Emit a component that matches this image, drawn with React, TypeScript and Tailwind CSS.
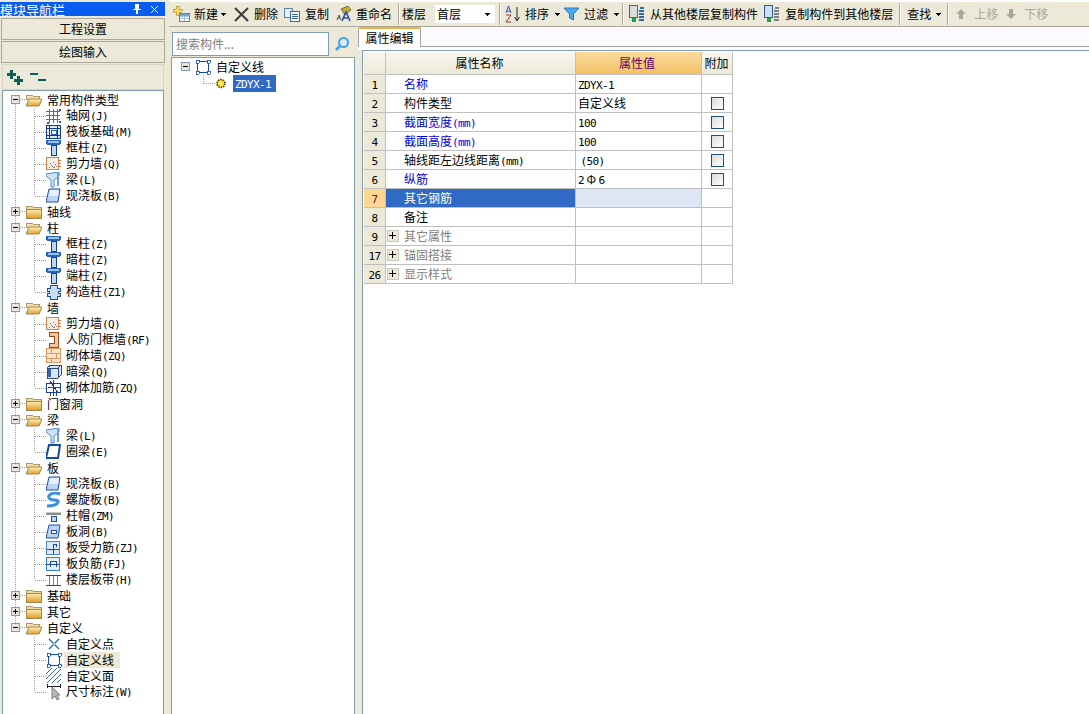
import type { ReactNode } from "react";

const cjk = "font-['Noto_Sans_CJK_SC','Liberation_Sans',sans-serif]";

// latin runs in the reference are a 6px wide mono, cjk is 12px
const Txt = ({ children }: { children: string }) => (
    <span className="whitespace-pre">
        {children.split(/([\x20-\x7e]+)/).map((part, i) =>
            /^[\x20-\x7e]+$/.test(part) ? (
                <span key={i} className="font-['DejaVu_Sans_Mono',monospace] text-[11px] tracking-[-0.6px]">
                    {part}
                </span>
            ) : (
                <span key={i}>{part}</span>
            )
        )}
    </span>
);

const S = ({ children, w = 16, h = 16 }: { children: ReactNode; w?: number; h?: number }) => (
    <svg width={w} height={h} viewBox={`0 0 ${w} ${h}`} className="block shrink-0" shapeRendering="crispEdges">
        {children}
    </svg>
);

const icons: Record<string, ReactNode> = {
    grid: (
        <S>
            <path d="M0 3.500h14M0 7.500h14M0 11.500h14M3.500 1v14M7.500 1v14M11.500 1v14" stroke="#4a6cb4" fill="none" />
            <path d="M13 1h2v2h-2zM13 13h2v2h-2zM1 14h2v2H1z" fill="#2a5cc0" />
        </S>
    ),
    raft: (
        <S>
            <rect x="0.5" y="1.5" width="14" height="13" fill="#dfe8f6" stroke="#123f80" />
            <path d="M1 4.5h13M1 11.5h13M3.5 2v12M11.5 2v12" stroke="#123f80" fill="none" />
            <path d="M5 6h5v4H5z" fill="#fff" stroke="#2a5cc0" />
        </S>
    ),
    column: (
        <S>
            <path d="M0 0h15v3l-1 2H1L0 3z" fill="#2a62c0" />
            <path d="M2 1h11v2H2z" fill="#9cc0ee" />
            <path d="M5 5h5v10H5z" fill="#bcd6f4" stroke="#123f80" />
        </S>
    ),
    shear: (
        <S>
            <rect x="0.5" y="1.5" width="12" height="12" fill="#f8eee4" stroke="#d8804a" />
            <path d="M3 11h1v1H3zM5 9h1v1H5zM7 11h2v1H7zM9 8h1v1H9zM4 7h1v1H4zM7 6h1v1H7zM10 10h1v1h-1zM6 10h1v1H6z" fill="#807870" />
            <path d="M13 4h2M13 7h2M13 10h2" stroke="#d8702a" />
        </S>
    ),
    beam: (
        <S>
            <path d="M0 2l13-2v4l-5 4v7H5V8L0 4z" fill="#cfe3f8" stroke="#4a8ad8" strokeWidth="1" shapeRendering="auto" />
            <path d="M11 1v13h2V1z" fill="#6aa0e0" />
        </S>
    ),
    slab: (
        <S>
            <path d="M3 1h11l-2 13H0z" fill="#bcd4f2" stroke="#1a50b0" shapeRendering="auto" />
            <path d="M4 2h9l-1 6H3z" fill="#e6f0fb" shapeRendering="auto" />
        </S>
    ),
    puzzle: (
        <S>
            <path d="M4 1h7v3h3v3h-2v2h2v3h-3v3H4v-3H1V9h2V7H1V4h3z" fill="#c8dcf6" stroke="#1a4ea0" />
        </S>
    ),
    door: (
        <S>
            <path d="M3 0h9v15H3v-4h5V4H3z" fill="#f0c8a0" stroke="#a0481c" />
        </S>
    ),
    brick: (
        <S>
            <rect x="0.5" y="0.5" width="14" height="14" fill="#fbe4cc" stroke="#e09a66" />
            <path d="M1 5h14M1 10h14M5 1v4M10 5v5M5 10v5" stroke="#e09a66" fill="none" />
        </S>
    ),
    hidden: (
        <S>
            <path d="M1 4l4-3h10v10l-3 3H1z" fill="#d8e6f6" stroke="#2a4a80" />
            <path d="M1 4h11v10M12 4l3-3" fill="none" stroke="#2a4a80" />
            <path d="M2 5h3v8H2z" fill="#3a66a8" />
        </S>
    ),
    masonry: (
        <S>
            <path d="M0 3h14v9H0z" fill="#fff" stroke="#1a3ea0" />
            <path d="M4 1l8 12M7 0v16M2 7h12M4 12v4M10 12v4" stroke="#1a3ea0" fill="none" />
        </S>
    ),
    ring: (
        <S>
            <path d="M3 1h11l-2 13H0z" fill="#fff" stroke="#1a4aa0" strokeWidth="2" shapeRendering="auto" />
        </S>
    ),
    spiral: (
        <S>
            <path d="M14 2C6-1 0 4 4 7c3 2 9 0 8 3-1 3-6 4-11 4" fill="none" stroke="#3a8ee0" strokeWidth="3" shapeRendering="auto" />
        </S>
    ),
    cap: (
        <S>
            <path d="M0 4h15v3H0z" fill="#8c8c8c" />
            <path d="M0 4h15v1H0z" fill="#c8c8c8" />
            <path d="M5 8h5v5H5z" fill="#c6daf4" stroke="#1a4ea0" />
        </S>
    ),
    hole: (
        <S>
            <path d="M3 1h11l-2 13H0z" fill="#bcd4f2" stroke="#1a50b0" shapeRendering="auto" />
            <rect x="5" y="6" width="5" height="3" fill="#fff" stroke="#1a50b0" />
        </S>
    ),
    rebarA: (
        <S>
            <rect x="0.5" y="1.5" width="13" height="13" fill="#d8e8f8" stroke="#4a88d0" />
            <path d="M1 9h12M7 4v10" stroke="#1a4aa0" fill="none" />
            <path d="M7 4h3v3" stroke="#1a4aa0" fill="none" />
        </S>
    ),
    rebarB: (
        <S>
            <rect x="0.5" y="1.5" width="13" height="13" fill="#e6f0fa" stroke="#3a78c8" />
            <path d="M1 8h12M4 5h6v6M4 5v6" stroke="#1a4aa0" fill="none" />
        </S>
    ),
    band: (
        <S>
            <path d="M0 3h15M0 13h15" stroke="#1a4aa0" />
            <path d="M3 4v9M7 4v9M11 4v9" stroke="#5a88c8" />
        </S>
    ),
    point: (
        <S>
            <path d="M3 3l10 10M13 3L3 13" stroke="#2a62b8" strokeWidth="1.4" shapeRendering="auto" />
            <circle cx="8" cy="8" r="1.5" fill="#9ac0ee" />
        </S>
    ),
    line: (
        <S>
            <rect x="2.5" y="2.5" width="11" height="11" fill="none" stroke="#0a4ac0" />
            <path d="M1 1h3v3H1zM12 1h3v3h-3zM1 12h3v3H1zM12 12h3v3h-3z" fill="#fff" stroke="#0a4ac0" strokeWidth="0.8" />
        </S>
    ),
    hatch: (
        <S>
            <path d="M0 6L6 0M0 11L11 0M1 15L15 1M6 15L15 6M11 15l4-4" stroke="#2a6ad8" fill="none" shapeRendering="auto" />
        </S>
    ),
    dim: (
        <S>
            <path d="M1 0v4M14 0v4M1 2h13" stroke="#202020" fill="none" />
            <path d="M6 3v12l3-3 2 4 2-1-2-4h3z" fill="#b8b8b8" stroke="#808080" shapeRendering="auto" />
        </S>
    ),
};

const Folder = ({ open }: { open: boolean }) => (
    <S>
        <defs>
            <linearGradient id="fold" x1="0" y1="0" x2="0" y2="1">
                <stop offset="0" stopColor="#fff3b8" />
                <stop offset="1" stopColor="#e0a030" />
            </linearGradient>
        </defs>
        {open ? (
            <>
                <path d="M0 3h6l1 1h6v3H0z" fill="#f4e2a8" stroke="#a89870" />
                <path d="M3 7h13l-3 7H0z" fill="url(#fold)" stroke="#a08848" shapeRendering="auto" />
            </>
        ) : (
            <>
                <path d="M0 2h6l1 1h8v2H0z" fill="#f0dca0" stroke="#a89870" />
                <path d="M0 5h15v9H0z" fill="url(#fold)" stroke="#a08848" />
            </>
        )}
    </S>
);

const ExpandBox = ({ open }: { open: boolean }) => (
    <>
        <rect x="8.5" y="3.5" width="8" height="8" fill="#e8e6dc" stroke="#7f9db9" />
        <path d={open ? "M10 7.5h5" : "M10 7.5h5M12.5 5v5"} stroke="#000" fill="none" />
    </>
);

type Node = { label: string; open: boolean; last?: boolean; kids: [string, string][] };

const tree: Node[] = [
    {
        label: "常用构件类型",
        open: true,
        kids: [
            ["grid", "轴网(J)"],
            ["raft", "筏板基础(M)"],
            ["column", "框柱(Z)"],
            ["shear", "剪力墙(Q)"],
            ["beam", "梁(L)"],
            ["slab", "现浇板(B)"],
        ],
    },
    { label: "轴线", open: false, kids: [] },
    {
        label: "柱",
        open: true,
        kids: [
            ["column", "框柱(Z)"],
            ["column", "暗柱(Z)"],
            ["column", "端柱(Z)"],
            ["puzzle", "构造柱(Z1)"],
        ],
    },
    {
        label: "墙",
        open: true,
        kids: [
            ["shear", "剪力墙(Q)"],
            ["door", "人防门框墙(RF)"],
            ["brick", "砌体墙(ZQ)"],
            ["hidden", "暗梁(Q)"],
            ["masonry", "砌体加筋(ZQ)"],
        ],
    },
    { label: "门窗洞", open: false, kids: [] },
    {
        label: "梁",
        open: true,
        kids: [
            ["beam", "梁(L)"],
            ["ring", "圈梁(E)"],
        ],
    },
    {
        label: "板",
        open: true,
        kids: [
            ["slab", "现浇板(B)"],
            ["spiral", "螺旋板(B)"],
            ["cap", "柱帽(ZM)"],
            ["hole", "板洞(B)"],
            ["rebarA", "板受力筋(ZJ)"],
            ["rebarB", "板负筋(FJ)"],
            ["band", "楼层板带(H)"],
        ],
    },
    { label: "基础", open: false, kids: [] },
    { label: "其它", open: false, kids: [] },
    {
        label: "自定义",
        open: true,
        last: true,
        kids: [
            ["point", "自定义点"],
            ["line", "自定义线"],
            ["hatch", "自定义面"],
            ["dim", "尺寸标注(W)"],
        ],
    },
];

const dot = { stroke: "#a0a0a0", strokeDasharray: "1 1", fill: "none" };

const RootRow = ({ node, first }: { node: Node; first: boolean }) => (
    <div className="flex h-4 items-center">
        <svg width="23" height="16" className="block shrink-0" shapeRendering="crispEdges">
            <path d={`M12.5 ${first ? 8 : 0}V${node.last ? 8 : 16}M13 7.5h10`} {...dot} />
            <ExpandBox open={node.open} />
        </svg>
        <Folder open={node.open} />
        <span className="ml-[5px] whitespace-nowrap">
            <Txt>{node.label}</Txt>
        </span>
    </div>
);

const KidRow = ({ icon, label, last, lastRoot }: { icon: string; label: string; last: boolean; lastRoot?: boolean }) => (
    <div className="flex h-4 items-center">
        <svg width="43" height="16" className="block shrink-0" shapeRendering="crispEdges">
            <path d={`${lastRoot ? "" : "M12.5 0V16"}M31.5 0V${last ? 8 : 16}M32 8.5h11`} {...dot} />
        </svg>
        <div className="w-4 shrink-0">{icons[icon]}</div>
        <span
            className={`ml-[2px] whitespace-nowrap px-[2px] leading-[16px] ${
                label === "自定义线" ? "bg-[#ece9d8] pr-[6px]" : ""
            }`}
        >
            <Txt>{label}</Txt>
        </span>
    </div>
);

const NavPanel = () => (
    <aside className="flex w-[165px] shrink-0 flex-col">
        <div className="mt-[2px] flex h-[14px] items-center justify-between bg-[#0a5cf0] pr-[6px] text-[13px] leading-none text-white">
            <span>模块导航栏</span>
            <div className="flex items-center gap-[9px]">
                <svg width="8" height="10" shapeRendering="crispEdges">
                    <path d="M2 0h4v5h2v1H5v4H3V6H0V5h2z" fill="#fff" />
                </svg>
                <svg width="9" height="9">
                    <path d="M1 1l7 7M8 1L1 8" stroke="#fff" fill="none" />
                </svg>
            </div>
        </div>
        <div className="ml-px mt-[2px] flex h-[22px] w-[164px] items-center justify-center border border-[#aca899] bg-[#ece9d8]">
            工程设置
        </div>
        <div className="ml-px mt-px flex h-[22px] w-[164px] items-center justify-center border border-[#aca899] bg-[#ece9d8]">
            绘图输入
        </div>
        <div className="ml-[2px] mt-px flex h-[26px] w-[162px] items-center gap-[7px] border border-[#d8d4c4] bg-[#ece9d8] pl-1">
            <svg width="16" height="15" shapeRendering="crispEdges">
                <path d="M3 0h3v3h3v3H6v3H3V6H0V3h3zM10 6h3v3h3v3h-3v3h-3v-3H7V9h3z" fill="#0d5c5c" />
            </svg>
            <svg width="16" height="15" shapeRendering="crispEdges">
                <path d="M0 3h8v2H0zM8 9h8v2H8z" fill="#0d5c5c" />
            </svg>
        </div>
        <div className="-mb-[2px] ml-[2px] min-h-0 w-[162px] flex-1 overflow-hidden border border-[#7f9db9] bg-white pt-px">
            {tree.map((node, i) => (
                <div key={i}>
                    <RootRow node={node} first={i === 0} />
                    {node.kids.map(([icon, label], k) => (
                        <KidRow
                            key={k}
                            icon={icon}
                            label={label}
                            last={k === node.kids.length - 1}
                            lastRoot={node.last}
                        />
                    ))}
                </div>
            ))}
        </div>
    </aside>
);

const Caret = () => (
    <svg width="5" height="3" className="block shrink-0" shapeRendering="crispEdges">
        <path d="M0 0h5L2.500 3z" fill="#000" />
    </svg>
);

const Sep = ({ cls }: { cls: string }) => <div className={`h-[22px] w-[2px] shrink-0 border-l border-[#aca899] bg-white ${cls}`} />;

const Toolbar = () => (
    <div className="flex h-[25px] shrink-0 items-center border-b border-[#aca899] bg-[#ece9d8] pl-[3px] whitespace-nowrap">
        <svg width="19" height="16" className="block shrink-0" shapeRendering="crispEdges">
            <path d="M4 0h3v3h3v3H7v3H4V6H1V3h3z" fill="#f4d860" stroke="#a89030" strokeWidth="0.6" />
            <rect x="7.500" y="7.500" width="10" height="8" fill="#fff" stroke="#5a80b8" />
            <path d="M8 8h9v2H8zM12 10v5M8 12.500h9" fill="#7aa0d8" stroke="#7aa0d8" strokeWidth="0.6" />
        </svg>
        <span className="ml-[3px]">新建</span>
        <div className="ml-[3px]"><Caret /></div>
        <svg width="15" height="15" className="ml-[8px] block shrink-0">
            <path d="M1 1l13 13M14 1L1 14" stroke="#3c3c3c" strokeWidth="2" fill="none" />
        </svg>
        <span className="ml-[5px]">删除</span>
        <svg width="16" height="15" className="ml-[6px] block shrink-0" shapeRendering="crispEdges">
            <rect x="0.500" y="1.500" width="8" height="9" fill="#e8f0fa" stroke="#5a80b0" />
            <rect x="6.500" y="4.500" width="9" height="10" fill="#fff" stroke="#3a66a0" />
            <path d="M8 7h6M8 9h6M8 11h6" stroke="#3a66a0" />
        </svg>
        <span className="ml-[5px]">复制</span>
        <svg width="16" height="16" className="ml-[7px] block shrink-0">
            <path d="M5 3l7-3 3 4-6 5z" fill="#c8a838" stroke="#6a7a40" />
            <path d="M1 14l2-5 2 5M2 12h2" fill="none" stroke="#555" />
            <path d="M6 15l4-9 4 9M8 12h4" fill="none" stroke="#2a52a0" strokeWidth="1.600" />
        </svg>
        <span className="ml-[4px]">重命名</span>
        <Sep cls="ml-[6px]" />
        <span className="ml-[2px]">楼层</span>
        <div className="ml-[9px] flex h-[18px] w-[60px] items-center justify-between bg-white pl-[2px] pr-[5px]">
            <span>首层</span>
            <Caret />
        </div>
        <Sep cls="ml-[4px]" />
        <svg width="16" height="18" className="ml-[4px] block shrink-0">
            <path d="M1 8l2.500-7L6 8M2 6h3" fill="none" stroke="#2a52b0" />
            <path d="M1 10h5l-5 7h5" fill="none" stroke="#a03030" />
            <path d="M12 2v13M9.500 12l2.500 4 2.500-4" stroke="#222" fill="none" />
        </svg>
        <span className="ml-[4px]">排序</span>
        <div className="ml-[6px]"><Caret /></div>
        <svg width="15" height="14" className="ml-[4px] block shrink-0">
            <path d="M0 1h15L9.500 7v6l-4-2V7z" fill="#4aa8ec" stroke="#2a78c0" />
        </svg>
        <span className="ml-[5px]">过滤</span>
        <div className="ml-[6px]"><Caret /></div>
        <Sep cls="ml-[3px]" />
        <svg width="16" height="18" className="ml-[5px] block shrink-0" shapeRendering="crispEdges">
            <rect x="0.500" y="0.500" width="8" height="12" fill="#dcdcdc" stroke="#606060" />
            <path d="M3 13h4v4H3z" fill="#20a050" />
            <path d="M10 6h5M10 9h5M10 12h5M10 15h5M11 3h4" stroke="#2a6ab0" strokeWidth="2" />
        </svg>
        <span className="ml-[5px]">从其他楼层复制构件</span>
        <svg width="16" height="18" className="ml-[6px] block shrink-0" shapeRendering="crispEdges">
            <rect x="0.500" y="0.500" width="8" height="12" fill="#cfe0f6" stroke="#2a5aa0" />
            <path d="M3 13h4v4H3z" fill="#20a050" />
            <path d="M10 6h5M10 9h5M10 12h5M10 15h5M11 3h4" stroke="#808080" strokeWidth="2" />
        </svg>
        <span className="ml-[5px]">复制构件到其他楼层</span>
        <Sep cls="ml-[6px]" />
        <span className="ml-[6px]">查找</span>
        <div className="ml-[5px]"><Caret /></div>
        <Sep cls="ml-[6px]" />
        <svg width="10" height="10" className="ml-[7px] block shrink-0">
            <path d="M5 0l5 5H7v5H3V5H0z" fill="#a8a898" />
        </svg>
        <span className="ml-[8px] text-[#a8a898]">上移</span>
        <svg width="10" height="10" className="ml-[8px] block shrink-0">
            <path d="M3 0h4v5h3l-5 5-5-5h3z" fill="#a8a898" />
        </svg>
        <span className="ml-[8px] text-[#a8a898]">下移</span>
    </div>
);

const ListPanel = () => (
    <div className="flex w-[186px] shrink-0 flex-col pl-[2px]">
        <div className="mt-[5px] flex h-[24px] items-center">
            <div className="ml-px flex h-[24px] w-[157px] items-center border border-[#7f9db9] bg-white pl-[3px] text-[#808080]">
                搜索构件...
            </div>
            <svg width="16" height="16" className="ml-[5px] block shrink-0">
                <circle cx="9.500" cy="6.500" r="4.500" fill="#d8ecfa" stroke="#4aa0e0" strokeWidth="2" />
                <path d="M6 10l-4 4" stroke="#4aa0e0" strokeWidth="2.500" />
            </svg>
        </div>
        <div className="-mb-[2px] mt-px min-h-0 flex-1 border border-[#7f9db9] bg-white pl-[9px] pt-px">
            <div className="flex h-[16px] items-center">
                <svg width="10" height="10" className="block shrink-0" shapeRendering="crispEdges">
                    <rect x="0.500" y="0.500" width="8" height="8" fill="#e8e6dc" stroke="#7f9db9" />
                    <path d="M2 4.500h5" stroke="#000" />
                </svg>
                <div className="ml-[4px]">{icons.line}</div>
                <span className="ml-[5px]">自定义线</span>
            </div>
            <div className="flex h-[17px] items-center">
                <svg width="48" height="17" className="block shrink-0" shapeRendering="crispEdges">
                    <path d="M22.500 0v8.500M23 8.500h11" {...dot} />
                    <circle cx="40" cy="8.500" r="4" fill="#f0e020" stroke="#403000" strokeDasharray="1.500 1" shapeRendering="auto" strokeWidth="1.500" />
                    <circle cx="40" cy="8.500" r="1.500" fill="#fff8a0" shapeRendering="auto" />
                </svg>
                <span className="ml-[4px] flex h-[17px] w-[43px] items-center bg-[#316ac5] pl-[2px] text-white">
                    <Txt>ZDYX-1</Txt>
                </span>
            </div>
        </div>
    </div>
);

type Row = { no: string; name: string; value?: string; blue?: boolean; check?: boolean; sel?: boolean; group?: boolean };

const rows: Row[] = [
    { no: "1", name: "名称", value: "ZDYX-1", blue: true },
    { no: "2", name: "构件类型", value: "自定义线", check: true },
    { no: "3", name: "截面宽度(mm)", value: "100", blue: true, check: true },
    { no: "4", name: "截面高度(mm)", value: "100", blue: true, check: true },
    { no: "5", name: "轴线距左边线距离(mm)", value: "\u2009(50)", check: true },
    { no: "6", name: "纵筋", value: "2\u2009Φ\u20096", blue: true, check: true },
    { no: "7", name: "其它钢筋", sel: true },
    { no: "8", name: "备注" },
    { no: "9", name: "其它属性", group: true },
    { no: "17", name: "锚固搭接", group: true },
    { no: "26", name: "显示样式", group: true },
];

const cell = "flex items-center border-b border-r border-[#c0c0c0]";
const headCell = `${cell} bg-gradient-to-b from-[#f8f7f0] to-[#ece9d8]`;

const PropTable = () => (
    <div className="ml-px mt-px grid w-[369px] grid-cols-[22px_190px_126px_31px] grid-rows-[23px_repeat(11,19px)]">
        <div className={headCell} />
        <div className={`${headCell} justify-center pr-[2px]`}>属性名称</div>
        <div className={`${cell} justify-center bg-gradient-to-b from-[#fbdc9e] to-[#f3c064] pr-[3px] text-[#660066]`}>属性值</div>
        <div className={`${headCell} justify-center pr-px`}>附加</div>
        {rows.map((row) => (
            <div key={row.no} className="contents">
                <div
                    className={`${cell} justify-center ${
                        row.sel ? "bg-[#ffd592] text-[#800040]" : "bg-[#ece9d8]"
                    }`}
                >
                    <Txt>{row.no}</Txt>
                </div>
                <div
                    className={`${cell} ${
                        row.sel ? "bg-[#316ac5] text-white" : row.group ? "text-[#808080]" : row.blue ? "text-[#0000e0]" : "text-black"
                    } ${row.group ? "pl-px" : "pl-[18px]"}`}
                >
                    {row.group && (
                        <svg width="12" height="12" className="mr-[5px] block shrink-0" shapeRendering="crispEdges">
                            <rect x="0.500" y="0.500" width="11" height="11" fill="#ece9d8" stroke="#c8c8c0" />
                            <path d="M2 5.500h7M5.500 2v7" stroke="#000" />
                        </svg>
                    )}
                    <Txt>{row.name}</Txt>
                </div>
                <div className={`${cell} pl-[2px] ${row.sel ? "bg-[#dde7f3]" : ""}`}>
                    {row.value && <Txt>{row.value}</Txt>}
                </div>
                <div className={`${cell} justify-center`}>
                    {row.check && (
                        <div className="h-[13px] w-[13px] border border-[#1c5180] bg-gradient-to-br from-[#dcdcd7] to-white" />
                    )}
                </div>
            </div>
        ))}
    </div>
);

const PropPanel = () => (
    <div className="ml-[3px] flex min-w-0 flex-1 flex-col">
        <div className="flex h-[20px] shrink-0 items-end border-b border-[#a0a0a0] bg-[#fbfbff]">
            <div className="-mb-px flex h-[20px] w-[63px] items-center justify-center rounded-t-[2px] border-r border-l border-t-2 border-[#a0a0a0] border-t-[#f3b040] bg-white">
                属性编辑
            </div>
        </div>
        <div className="h-[3px] shrink-0 bg-white" />
        <div className="ml-[4px] flex min-h-0 flex-1 flex-col border-l border-t border-[#7f9db9] bg-white">
            <PropTable />
        </div>
    </div>
);

export default function App() {
    return (
        <div className={`flex h-[714px] w-[1089px] overflow-hidden bg-[#ece9d8] text-[12px] leading-none text-black ${cjk}`}>
            <NavPanel />
            <div className="ml-[4px] flex min-w-0 flex-1 flex-col">
                <div className="h-[2px] shrink-0 bg-white" />
                <Toolbar />
                <div className="flex min-h-0 flex-1">
                    <ListPanel />
                    <PropPanel />
                </div>
            </div>
        </div>
    );
}
